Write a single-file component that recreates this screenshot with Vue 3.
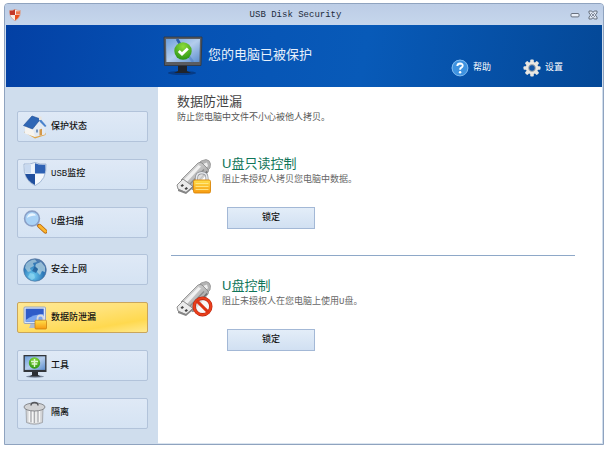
<script setup>
import { ref } from 'vue'

const active = ref('leak')

const menu = [
    { id: 'status', label: '保护状态' },
    { id: 'usb', label: 'USB监控' },
    { id: 'scan', label: 'U盘扫描' },
    { id: 'web', label: '安全上网' },
    { id: 'leak', label: '数据防泄漏' },
    { id: 'tools', label: '工具' },
    { id: 'trash', label: '隔离' },
]

const controls = ref([
    { id: 'readonly', title: 'U盘只读控制', text: '阻止未授权人拷贝您电脑中数据。', locked: false },
    { id: 'block', title: 'U盘控制', text: '阻止未授权人在您电脑上使用U盘。', locked: false },
])
</script>

<template>
    <div class="window">
        <!-- shared gradients -->
        <svg class="defs" width="0" height="0" aria-hidden="true">
            <defs>
                <linearGradient id="gScreen" x1="0" y1="0" x2="1" y2="1">
                    <stop offset="0" stop-color="#6d9fdb"/>
                    <stop offset="0.5" stop-color="#b4cdec"/>
                    <stop offset="1" stop-color="#5d8fcf"/>
                </linearGradient>
                <radialGradient id="gGreen" cx="0.5" cy="0.25" r="0.8">
                    <stop offset="0" stop-color="#8edc3c"/>
                    <stop offset="1" stop-color="#249012"/>
                </radialGradient>
                <linearGradient id="gGold" x1="0" y1="0" x2="0" y2="1">
                    <stop offset="0" stop-color="#ffe04a"/>
                    <stop offset="1" stop-color="#f79a10"/>
                </linearGradient>
                <linearGradient id="gBlue" x1="0" y1="0" x2="1" y2="1">
                    <stop offset="0" stop-color="#7fb0ea"/>
                    <stop offset="1" stop-color="#1c4fa8"/>
                </linearGradient>
                <linearGradient id="gMetal" x1="0" y1="0" x2="1" y2="1">
                    <stop offset="0" stop-color="#e8e8e8"/>
                    <stop offset="0.5" stop-color="#bdbdbd"/>
                    <stop offset="1" stop-color="#7f7f7f"/>
                </linearGradient>
                <radialGradient id="gGlobe" cx="0.4" cy="0.75" r="0.8">
                    <stop offset="0" stop-color="#6fd0f4"/>
                    <stop offset="0.6" stop-color="#2c78b8"/>
                    <stop offset="1" stop-color="#5d7fae"/>
                </radialGradient>
            </defs>
        </svg>

        <header class="titlebar">
            <svg class="logo" viewBox="0 0 12 12">
                <path d="M0.5 1.5Q4 1.6 6 0.3Q8 1.6 11.5 1.5Q12 8.5 6 11.8Q0 8.5 0.5 1.5Z" fill="#f8ece6" stroke="#c98b78" stroke-width="0.6"/>
                <path d="M0.8 1.8Q4 1.8 6 0.6V6H1.2Q0.6 4 0.8 1.8Z" fill="#c3382a"/>
                <path d="M6 6H10.8Q9.6 9.6 6 11.4Z" fill="#e8501f"/>
                <path d="M7 2.2Q9 2.4 11 2V5.4H7Z" fill="#ef7950"/>
            </svg>
            <h1>USB Disk Security</h1>
            <div class="winButtons">
                <button type="button" aria-label="Minimize">
                    <svg viewBox="0 0 10 10"><rect x="1" y="3.500" width="8" height="3.400" rx="1" fill="#e9eff8" stroke="#5b6472" stroke-width="0.9"/></svg>
                </button>
                <button type="button" aria-label="Close">
                    <svg viewBox="0 0 10 10">
                        <path d="M1 1H3.800L5 2.500L6.200 1H9V3L7.300 5L9 7V9H6.200L5 7.500L3.800 9H1V7L2.700 5L1 3Z" fill="#dfe7f3" stroke="#5b6472" stroke-width="0.9"/>
                        <path d="M3 3L7 7M7 3L3 7" stroke="#6d7584" stroke-width="0.8"/>
                    </svg>
                </button>
            </div>
        </header>

        <section class="banner">
            <div class="state">
                <svg class="monitor" viewBox="0 0 40 40">
                    <ellipse cx="19" cy="37" rx="14" ry="2" fill="#062c66" opacity="0.6"/>
                    <path d="M15 29H24V35L28 37H11L15 35Z" fill="#20242a"/>
                    <path d="M1 1H39L38 29.500H1.500Z" fill="#5a5c60" stroke="#33363b" stroke-width="0.8"/>
                    <path d="M3 3H37L36.400 26H3.400Z" fill="url(#gScreen)"/>
                    <path d="M14 3L17 8L30 26" fill="none" stroke="#3b70bb" stroke-width="2.500" opacity="0.4"/>
                    <path d="M14 3L17 8" fill="none" stroke="#2b5ea8" stroke-width="2.500"/>
                    <circle cx="20" cy="15" r="8.700" fill="url(#gGreen)"/>
                    <path d="M15.800 15L19 18L24.800 12.500" fill="none" stroke="#fff" stroke-width="2.800"/>
                </svg>
                <p>您的电脑已被保护</p>
            </div>
            <nav class="links">
                <a href="#help">
                    <svg viewBox="0 0 18 18">
                        <circle cx="9" cy="9" r="8.300" fill="url(#gBlue)"/>
                        <circle cx="9" cy="9" r="7.900" fill="#3d92e0" stroke="#83c0f2" stroke-width="0.9"/>
                        <path d="M6.300 7Q6.500 4.500 9.100 4.500Q11.800 4.600 11.700 6.900Q11.500 8.200 10 8.900Q9.100 9.400 9.100 10.800" fill="none" stroke="#fff" stroke-width="1.900"/>
                        <circle cx="9.100" cy="13.200" r="1.200" fill="#fff"/>
                    </svg>
                    <span>帮助</span>
                </a>
                <a href="#settings">
                    <svg viewBox="0 0 18 18">
                        <g fill="#e9e7e2">
                            <rect x="7.200" y="0.500" width="3.600" height="17" rx="1"/>
                            <rect x="7.200" y="0.500" width="3.600" height="17" rx="1" transform="rotate(45 9 9)"/>
                            <rect x="7.200" y="0.500" width="3.600" height="17" rx="1" transform="rotate(90 9 9)"/>
                            <rect x="7.200" y="0.500" width="3.600" height="17" rx="1" transform="rotate(135 9 9)"/>
                            <circle cx="9" cy="9" r="6.200"/>
                        </g>
                        <circle cx="9" cy="9" r="3.400" fill="#1256a8" stroke="#b9b5ae" stroke-width="0.9"/>
                    </svg>
                    <span>设置</span>
                </a>
            </nav>
        </section>

        <div class="body">
            <nav class="sidebar">
                <button
                    v-for="item in menu"
                    :key="item.id"
                    type="button"
                    :class="{ active: active === item.id }"
                    @click="active = item.id"
                >
                    <svg v-if="item.id === 'status'" viewBox="0 0 24 24">
                        <path d="M1 17L12 23.500L22.500 20V18L12 14Z" fill="#e0a64a"/>
                        <path d="M2 11L12 13V22L2 18.500Z" fill="#f6f4f0"/>
                        <path d="M10 14L17 6L22 12V19.500L12 22Z" fill="#e3eaf3"/>
                        <path d="M16.500 14.500L19 13.800V20L16.500 20.800Z" fill="#d3984a"/>
                        <path d="M13 14.500H15V17.500H13Z" fill="#7393bd"/>
                        <path d="M0.500 10.500L9 1L17.500 4L9.500 14Z" fill="#2e66b5" stroke="#1f4c92" stroke-width="0.600"/>
                        <path d="M17.500 4L23.500 11L22 12L16.500 6.500Z" fill="#4b83cc"/>
                        <path d="M16 1.500H18.500V5H16Z" fill="#e9e4dd"/>
                    </svg>
                    <svg v-else-if="item.id === 'usb'" viewBox="0 0 24 24">
                        <path d="M1 2Q7 2.800 12 0.500Q17 2.800 23 2Q24 18 12 23.700Q0 18 1 2Z" fill="#f4f8fd" stroke="#90a9cc" stroke-width="0.8"/>
                        <path d="M12 1.200Q17 3.300 22.300 2.700Q22.700 8 21.800 11.500H12Z" fill="#2f62b4"/>
                        <path d="M2.200 12H12V23Q4 19 2.200 12Z" fill="#204f9e"/>
                        <path d="M2 3Q7 3.500 11.500 1.800V11.500H2.500Q1.700 8 2 3Z" fill="#c8d9f0"/>
                        <path d="M8 2.800L11.500 1.800V11.500H8Z" fill="#eef4fb"/>
                    </svg>
                    <svg v-else-if="item.id === 'scan'" viewBox="0 0 24 24">
                        <path d="M14 14L17 17" stroke="#8b8f98" stroke-width="2.500"/>
                        <path d="M16.500 16L22.500 21.500" stroke="#b8660c" stroke-width="4.400" stroke-linecap="round"/>
                        <path d="M16.500 16L22.300 21.300" stroke="#fbb52e" stroke-width="2.800" stroke-linecap="round"/>
                        <circle cx="9" cy="8.500" r="7.400" fill="#a9d2f6" stroke="#8a9fc6" stroke-width="1.600"/>
                        <path d="M4 8Q4.500 3.500 9.500 3.300Q12.500 3.600 13 5.500Q7 5.500 4 8Z" fill="#eaf5ff"/>
                    </svg>
                    <svg v-else-if="item.id === 'web'" viewBox="0 0 24 24">
                        <circle cx="12" cy="12" r="11.300" fill="url(#gGlobe)" stroke="#4a6b97" stroke-width="0.6"/>
                        <path d="M3 6Q7 1.500 12 1.500L14 4L10 5L11 8L7 10L8 13L5 14L2 10Z" fill="#a9cbdc" opacity="0.75"/>
                        <path d="M13 6L18 4L22 9V14L19 13L17 17L14 14L15 11L12 9Z" fill="#bcd9e4" opacity="0.7"/>
                        <path d="M7 15L11 16L12 20L9 22L5 19Z" fill="#8fd6ef" opacity="0.7"/>
                        <path d="M12 8L15 11L13 15L9 13Z" fill="#164a86" opacity="0.6"/>
                    </svg>
                    <svg v-else-if="item.id === 'leak'" viewBox="0 0 24 24">
                        <path d="M8 17H15L17 22H6Z" fill="#aebbd0"/>
                        <rect x="1" y="1" width="21.500" height="16.500" rx="1" fill="#dce6f5" stroke="#8498be" stroke-width="0.8"/>
                        <rect x="2.700" y="2.700" width="18" height="13" fill="#2f5cc8"/>
                        <path d="M2.700 14Q10 8 20.700 8V15.700H2.700Z" fill="#7ba6f0"/>
                        <path d="M14.500 15V12.500Q14.500 9.500 17.500 9.500Q20.500 9.500 20.500 12.500V15" fill="none" stroke="#d9dbe0" stroke-width="1.800"/>
                        <rect x="12" y="14.200" width="11.500" height="8.800" rx="1" fill="url(#gGold)" stroke="#c57b08" stroke-width="0.700"/>
                    </svg>
                    <svg v-else-if="item.id === 'tools'" viewBox="0 0 24 24">
                        <ellipse cx="12" cy="22.500" rx="9" ry="1.200" fill="#7c8aa0"/>
                        <path d="M9 17H15V21L18 22.500H6L9 21Z" fill="#2b2e33"/>
                        <rect x="0.500" y="1" width="23" height="17" fill="#33363b"/>
                        <rect x="1.800" y="2.300" width="20.400" height="13.600" fill="url(#gScreen)"/>
                        <circle cx="11.500" cy="9" r="5.700" fill="url(#gGreen)"/>
                        <path d="M8 7.500H15M8.700 10H14.300M11.500 5V13" stroke="#dff5d5" stroke-width="1.400"/>
                    </svg>
                    <svg v-else viewBox="0 0 24 24">
                        <path d="M3 8H20L19.500 21.500Q11.500 25 3.500 21.500Z" fill="#d4d5d7" stroke="#85878a" stroke-width="0.6"/>
                        <path d="M6.300 9V21M9.500 9V22M13 9V22M16.500 9V21" stroke="#f6f6f6" stroke-width="1.400"/>
                        <path d="M8 9V21M11.500 9V22M15 9V21" stroke="#9a9b9e" stroke-width="0.7"/>
                        <ellipse cx="11.500" cy="6" rx="10.500" ry="4" fill="#d2d3d5" stroke="#737578" stroke-width="0.8"/>
                        <path d="M8 4.500Q8 1.500 11.500 1.500Q15 1.500 15 4.500" fill="none" stroke="#55575b" stroke-width="1.500"/>
                    </svg>
                    <span>{{ item.label }}</span>
                </button>
            </nav>

            <main>
                <h2>数据防泄漏</h2>
                <p class="intro">防止您电脑中文件不小心被他人拷贝。</p>

                <article v-for="c in controls" :key="c.id">
                    <svg class="stick" viewBox="0 0 38 38">
                        <path d="M25 3L30 1.500Q34 2 34.500 6L34 10L29 15L21 7Z" fill="#b4b4b4" stroke="#8b8b8b" stroke-width="0.7"/>
                        <path d="M27 6L31 4.500L32 8L29 11Z" fill="#ededed"/>
                        <path d="M5 22L22 5Q24 4 26 5L32 11Q33 12.500 32 14L17 32Z" fill="url(#gMetal)" stroke="#858585" stroke-width="0.8"/>
                        <path d="M8 21.500L22.500 7L25 8.500L11 24Z" fill="#f1f1f1"/>
                        <path d="M14 26L28 11.500" stroke="#8a8a8a" stroke-width="1.200"/>
                        <path d="M17 29L31 13.500" stroke="#6b6b6b" stroke-width="1.200"/>
                        <path d="M1 27L7 21L17 28.500L10 34.500L2 31Z" fill="#ebebeb" stroke="#777" stroke-width="0.8"/>
                        <path d="M2 31L10 34L17 28V30L10 36L2 33Z" fill="#858585"/>
                        <path d="M4.500 27.500L6.500 26L8 27.500L6 29ZM8.500 30.500L10.500 29L12 30.500L10 32Z" fill="#444"/>
                        <g v-if="c.id === 'readonly'">
                            <path d="M20.500 23V20Q20.500 14.800 25.700 14.800Q31 14.800 31 20V23" fill="#fff" fill-opacity="0.6" stroke="#8e9196" stroke-width="3"/>
                            <path d="M20.500 23V20Q20.500 14.800 25.700 14.800Q31 14.800 31 20V23" fill="none" stroke="#e6e8ec" stroke-width="1.600"/>
                            <rect x="17.500" y="22" width="17" height="13" rx="1.500" fill="url(#gGold)" stroke="#d9860a" stroke-width="0.9"/>
                            <path d="M19.500 25.500H32.500M19.500 28.500H32.500M19.500 31.500H32.500" stroke="#ffe98a" stroke-width="0.9"/>
                        </g>
                        <g v-else fill="none">
                            <circle cx="26.500" cy="26.500" r="8.300" fill="#f6f6f6" fill-opacity="0.75" stroke="#b82210" stroke-width="3.400"/>
                            <circle cx="26.500" cy="26.500" r="8.300" stroke="#e8401c" stroke-width="2.300"/>
                            <path d="M20.600 20.600L32.400 32.400" stroke="#dc3314" stroke-width="2.900"/>
                        </g>
                    </svg>
                    <div class="control">
                        <h3>{{ c.title }}</h3>
                        <p>{{ c.text }}</p>
                        <button type="button" @click="c.locked = !c.locked">锁定</button>
                    </div>
                </article>
            </main>
        </div>
    </div>
</template>

<style>
body{
    background-color: white;
}
</style>

<style scoped>
.window{
    display: flex;
    flex-direction: column;
    box-sizing: border-box;
    min-height: calc(100vh - 7px);
    margin: 3px 3px 4px 4px;
    border: 1px solid #8fa3bf;
    border-radius: 4px 4px 0 0;
    background-color: #cfdded;
    font-family: "Liberation Mono", "Noto Sans CJK SC", monospace;
    font-size: 9px;
    line-height: 14px;
    color: #111;
    overflow: hidden;
}

h1, h2, h3, p{
    margin: 0;
    font-weight: normal;
}

button{
    font: inherit;
    color: inherit;
    cursor: pointer;
}

svg{
    display: block;
    flex: none;
}

.defs{
    position: absolute;
}

.titlebar{
    display: flex;
    align-items: center;
    height: 21px;
    padding: 0 5px 0 4px;
    background: linear-gradient(#bccde6, #c6d6ec);
}

.logo{
    width: 12px;
    height: 12px;
}

.titlebar h1{
    flex: 1;
    font-size: 9px;
    text-align: center;
    color: #222c3c;
}

.winButtons{
    display: flex;
    gap: 8px;
}

.winButtons button{
    padding: 0;
    border: none;
    background: none;
}

.winButtons svg{
    width: 10px;
    height: 10px;
}

.banner{
    display: flex;
    justify-content: space-between;
    height: 62px;
    margin: 0 1px;
    padding: 0 39px 0 157px;
    box-sizing: border-box;
    background: linear-gradient(100deg, #0340a4 0%, #0652b4 30%, #085ab8 60%, #044897 100%);
    color: #e8f1fc;
}

.state{
    display: flex;
    align-items: center;
    gap: 5px;
}

.state p{
    font-size: 13px;
    line-height: 20px;
}

.monitor{
    width: 40px;
    height: 40px;
}

.links{
    display: flex;
    align-items: flex-end;
    gap: 32px;
    padding-bottom: 10px;
}

.links a{
    display: flex;
    align-items: center;
    gap: 4px;
    color: white;
    text-decoration: none;
}

.links svg{
    width: 18px;
    height: 18px;
}

.body{
    display: flex;
    flex: 1;
}

.sidebar{
    display: flex;
    flex-direction: column;
    justify-content: space-between;
    gap: 10px;
    width: 153px;
    box-sizing: border-box;
    padding: 24px 10px 15px 12px;
    background-color: #cfdded;
}

.sidebar button{
    display: flex;
    align-items: center;
    gap: 4px;
    height: 31px;
    padding: 0 5px;
    border: 1px solid #b2c3da;
    border-radius: 2px;
    background: linear-gradient(#dfe9f6, #d5e3f3);
    font-weight: 500;
}

.sidebar button:hover{
    border-color: #8ba6c9;
}

.sidebar button.active{
    border-color: #c9a55c;
    background: linear-gradient(170deg, #ffe893, #ffe27a 40%, #ffd94f 75%, #ffe98f);
}

.sidebar svg{
    width: 24px;
    height: 24px;
}

main{
    flex: 1;
    padding: 6px 27px 0 13px;
    margin-right: 1px;
    border-bottom: 1px solid #dbe5f0;
    background-color: white;
}

h2, h3{
    font-family: "Liberation Sans", "Noto Sans CJK SC", sans-serif;
    font-size: 13px;
    line-height: 18px;
}

h2{
    padding-left: 6px;
    color: #444;
}

.intro{
    padding-left: 6px;
    color: #555;
}

article{
    display: flex;
    gap: 8px;
    padding: 30px 0 26px 5px;
}

article + article{
    padding-top: 21px;
    border-top: 1px solid #8ea8c8;
}

.stick{
    width: 38px;
    height: 38px;
    margin-top: 3px;
}

.control h3{
    color: #0f7558;
}

.control p{
    color: #666;
}

.control button{
    display: block;
    width: 88px;
    height: 22px;
    margin: 20px 0 0 5px;
    padding: 0;
    border: 1px solid #a3b8d6;
    background: linear-gradient(#e3edf8, #d1e0f2);
    font-weight: 500;
}

.control button:hover{
    background: #d9e6f5;
}
</style>
